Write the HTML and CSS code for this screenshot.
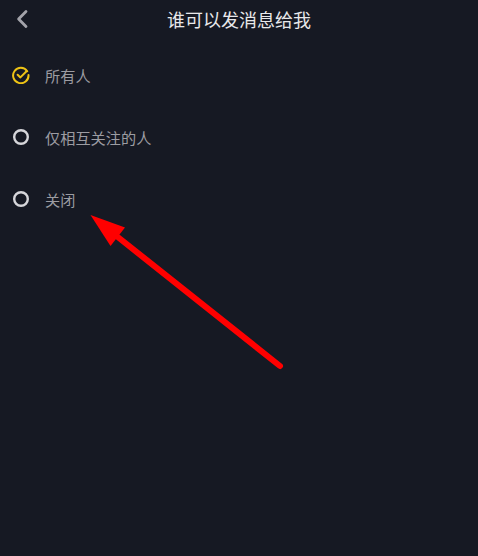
FILE: index.html
```html
<!DOCTYPE html>
<html lang="zh">
<head>
<meta charset="utf-8">
<link rel="stylesheet" href="styles.css">
</head>
<body>
<div class="page">
  <header class="header">
    <svg class="back" width="14" height="20" viewBox="0 0 14 20"><path d="M11 2.5 L3.6 10 L11 17.5" fill="none" stroke="#a3a3aa" stroke-width="2.8" stroke-linecap="round" stroke-linejoin="round"/></svg>
    <h1 class="title">谁可以发消息给我</h1>
  </header>
  <ul class="options">
    <li class="option">
      <svg class="icon" width="18" height="18" viewBox="0 0 18 18"><path d="M15.2 5.2 A7.7 7.7 0 1 0 16.5 9" fill="none" stroke="#eec315" stroke-width="2" stroke-linecap="round"/><path d="M5.6 8.8 L8.4 11.4 L14.5 5.2" fill="none" stroke="#eec315" stroke-width="2" stroke-linecap="round" stroke-linejoin="round"/></svg>
      <span class="label">所有人</span>
    </li>
    <li class="option">
      <svg class="icon" width="18" height="18" viewBox="0 0 18 18"><circle cx="9" cy="9" r="6.8" fill="none" stroke="#d6d6da" stroke-width="2.4"/></svg>
      <span class="label">仅相互关注的人</span>
    </li>
    <li class="option">
      <svg class="icon" width="18" height="18" viewBox="0 0 18 18"><circle cx="9" cy="9" r="6.8" fill="none" stroke="#d6d6da" stroke-width="2.4"/></svg>
      <span class="label">关闭</span>
    </li>
  </ul>
  <svg class="arrow" width="478" height="556" viewBox="0 0 478 556">
    <line x1="280" y1="366" x2="114" y2="234" stroke="#ff0000" stroke-width="6" stroke-linecap="round"/>
    <polygon points="90.5,215 125,227.5 110.5,246" fill="#ff0000"/>
  </svg>
</div>
</body>
</html>
```

FILE: styles.css
```css
html, body {
  margin: 0;
  padding: 0;
  background: #161923;
}
.page {
  position: relative;
  width: 478px;
  height: 556px;
  overflow: hidden;
  background: #161923;
  font-family: "Noto Sans CJK SC", "Noto Sans", sans-serif;
}
.header {
  position: relative;
  height: 38px;
  display: flex;
  align-items: center;
  justify-content: center;
}
.back {
  position: absolute;
  left: 15px;
  top: 9px;
}
.title {
  margin: 0;
  font-size: 18px;
  font-weight: 400;
  color: #e8e8ea;
  line-height: 38px;
}
.options {
  list-style: none;
  margin: 6px 0 0;
  padding: 0;
}
.option {
  height: 62px;
  display: flex;
  align-items: center;
  padding-left: 12px;
}
.icon {
  flex: none;
  display: block;
}
.label {
  margin-left: 15px;
  font-size: 15.2px;
  color: #9c9ca2;
}
.arrow {
  position: absolute;
  left: 0;
  top: 0;
  pointer-events: none;
}
```
